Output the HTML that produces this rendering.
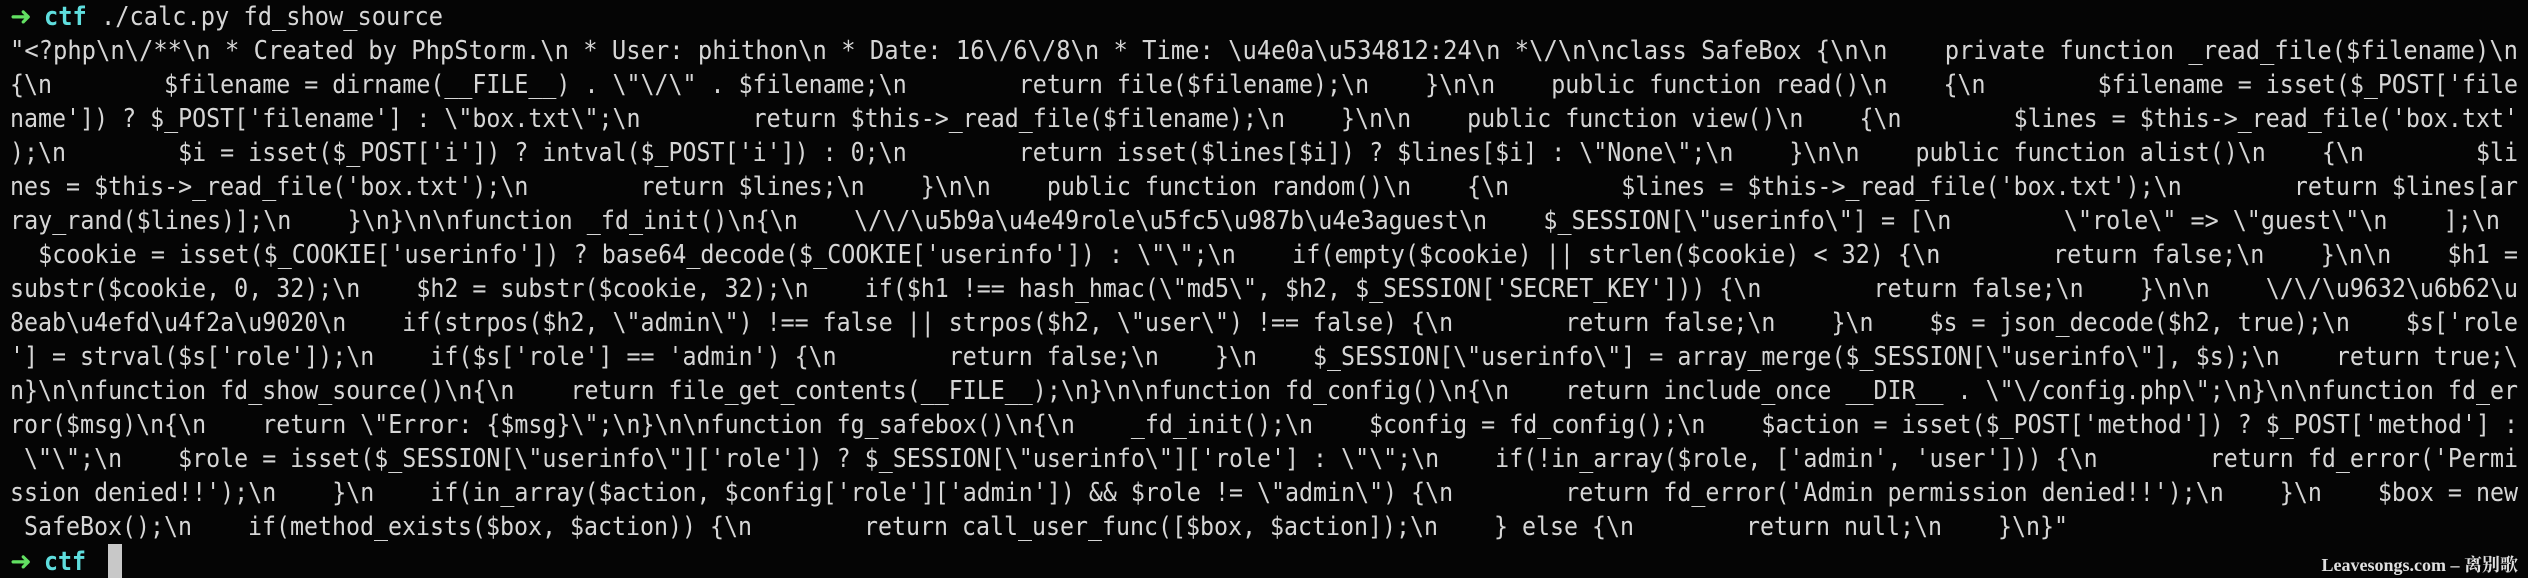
<!DOCTYPE html>
<html><head><meta charset="utf-8"><style>
html,body{margin:0;padding:0;background:#050505;width:2528px;height:578px;overflow:hidden}
svg{position:absolute;left:0;top:0}
text{font-family:"DejaVu Sans Mono","Liberation Mono",monospace;font-size:26px;fill:#d6d6d6;white-space:pre}
.ar{fill:#62e062;font-weight:bold;font-family:"DejaVu Sans",sans-serif}
.c{fill:#5fdede;font-weight:bold}
.wm{font-family:"Liberation Serif","Noto Serif CJK SC",serif;font-size:18px;font-weight:bold;fill:#e0e0e0}
</style></head><body>
<svg width="2528" height="578" xmlns="http://www.w3.org/2000/svg">
<text x="10" y="25"><tspan class="ar">➜</tspan></text>
<text x="44" y="25" textLength="399" lengthAdjust="spacingAndGlyphs"><tspan class="c">ctf</tspan> ./calc.py fd_show_source</text>
<text x="10" y="59" textLength="2508" lengthAdjust="spacingAndGlyphs">"&lt;?php\n\/**\n * Created by PhpStorm.\n * User: phithon\n * Date: 16\/6\/8\n * Time: \u4e0a\u534812:24\n *\/\n\nclass SafeBox {\n\n    private function _read_file($filename)\n</text>
<text x="10" y="93" textLength="2508" lengthAdjust="spacingAndGlyphs">{\n        $filename = dirname(__FILE__) . \"\/\" . $filename;\n        return file($filename);\n    }\n\n    public function read()\n    {\n        $filename = isset($_POST['file</text>
<text x="10" y="127" textLength="2508" lengthAdjust="spacingAndGlyphs">name']) ? $_POST['filename'] : \"box.txt\";\n        return $this-&gt;_read_file($filename);\n    }\n\n    public function view()\n    {\n        $lines = $this-&gt;_read_file('box.txt'</text>
<text x="10" y="161" textLength="2508" lengthAdjust="spacingAndGlyphs">);\n        $i = isset($_POST['i']) ? intval($_POST['i']) : 0;\n        return isset($lines[$i]) ? $lines[$i] : \"None\";\n    }\n\n    public function alist()\n    {\n        $li</text>
<text x="10" y="195" textLength="2508" lengthAdjust="spacingAndGlyphs">nes = $this-&gt;_read_file('box.txt');\n        return $lines;\n    }\n\n    public function random()\n    {\n        $lines = $this-&gt;_read_file('box.txt');\n        return $lines[ar</text>
<text x="10" y="229" textLength="2490" lengthAdjust="spacingAndGlyphs">ray_rand($lines)];\n    }\n}\n\nfunction _fd_init()\n{\n    \/\/\u5b9a\u4e49role\u5fc5\u987b\u4e3aguest\n    $_SESSION[\"userinfo\"] = [\n        \"role\" =&gt; \"guest\"\n    ];\n</text>
<text x="10" y="263" textLength="2508" lengthAdjust="spacingAndGlyphs">  $cookie = isset($_COOKIE['userinfo']) ? base64_decode($_COOKIE['userinfo']) : \"\";\n    if(empty($cookie) || strlen($cookie) &lt; 32) {\n        return false;\n    }\n\n    $h1 =</text>
<text x="10" y="297" textLength="2508" lengthAdjust="spacingAndGlyphs">substr($cookie, 0, 32);\n    $h2 = substr($cookie, 32);\n    if($h1 !== hash_hmac(\"md5\", $h2, $_SESSION['SECRET_KEY'])) {\n        return false;\n    }\n\n    \/\/\u9632\u6b62\u</text>
<text x="10" y="331" textLength="2508" lengthAdjust="spacingAndGlyphs">8eab\u4efd\u4f2a\u9020\n    if(strpos($h2, \"admin\") !== false || strpos($h2, \"user\") !== false) {\n        return false;\n    }\n    $s = json_decode($h2, true);\n    $s['role</text>
<text x="10" y="365" textLength="2508" lengthAdjust="spacingAndGlyphs">'] = strval($s['role']);\n    if($s['role'] == 'admin') {\n        return false;\n    }\n    $_SESSION[\"userinfo\"] = array_merge($_SESSION[\"userinfo\"], $s);\n    return true;\</text>
<text x="10" y="399" textLength="2508" lengthAdjust="spacingAndGlyphs">n}\n\nfunction fd_show_source()\n{\n    return file_get_contents(__FILE__);\n}\n\nfunction fd_config()\n{\n    return include_once __DIR__ . \"\/config.php\";\n}\n\nfunction fd_er</text>
<text x="10" y="433" textLength="2508" lengthAdjust="spacingAndGlyphs">ror($msg)\n{\n    return \"Error: {$msg}\";\n}\n\nfunction fg_safebox()\n{\n    _fd_init();\n    $config = fd_config();\n    $action = isset($_POST['method']) ? $_POST['method'] :</text>
<text x="10" y="467" textLength="2508" lengthAdjust="spacingAndGlyphs"> \"\";\n    $role = isset($_SESSION[\"userinfo\"]['role']) ? $_SESSION[\"userinfo\"]['role'] : \"\";\n    if(!in_array($role, ['admin', 'user'])) {\n        return fd_error('Permi</text>
<text x="10" y="501" textLength="2508" lengthAdjust="spacingAndGlyphs">ssion denied!!');\n    }\n    if(in_array($action, $config['role']['admin']) &amp;&amp; $role != \"admin\") {\n        return fd_error('Admin permission denied!!');\n    }\n    $box = new</text>
<text x="10" y="535" textLength="2058" lengthAdjust="spacingAndGlyphs"> SafeBox();\n    if(method_exists($box, $action)) {\n        return call_user_func([$box, $action]);\n    } else {\n        return null;\n    }\n}"</text>
<text x="10" y="570"><tspan class="ar">➜</tspan></text>
<text x="44" y="570" textLength="42" lengthAdjust="spacingAndGlyphs" class="c">ctf</text>
<rect x="108" y="544" width="14" height="34" fill="#c8c8c8"/>
<text x="2518" y="571" text-anchor="end" class="wm">Leavesongs.com – 离别歌</text>
</svg>
</body></html>
